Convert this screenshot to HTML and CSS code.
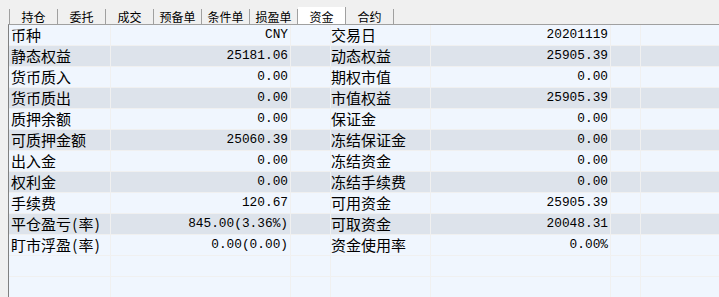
FILE: index.html
```html
<!DOCTYPE html>
<html lang="zh-CN">
<head>
<meta charset="utf-8">
<title>资金</title>
<link rel="stylesheet" href="styles.css">
</head>
<body>
<div class="tabs">
  <div class="tab first">持仓</div>
  <div class="tab">委托</div>
  <div class="tab">成交</div>
  <div class="tab">预备单</div>
  <div class="tab">条件单</div>
  <div class="tab">损盈单</div>
  <div class="tab active">资金</div>
  <div class="tab">合约</div>
</div>
<div class="grid">
  <div class="row light"><div class="c lbl">币种</div><div class="c val">CNY</div><div class="c"></div><div class="c lbl2">交易日</div><div class="c val">20201119</div><div class="c"></div><div class="c last"></div></div>
  <div class="row dark"><div class="c lbl">静态权益</div><div class="c val">25181.06</div><div class="c"></div><div class="c lbl2">动态权益</div><div class="c val">25905.39</div><div class="c"></div><div class="c last"></div></div>
  <div class="row light"><div class="c lbl">货币质入</div><div class="c val">0.00</div><div class="c"></div><div class="c lbl2">期权市值</div><div class="c val">0.00</div><div class="c"></div><div class="c last"></div></div>
  <div class="row dark"><div class="c lbl">货币质出</div><div class="c val">0.00</div><div class="c"></div><div class="c lbl2">市值权益</div><div class="c val">25905.39</div><div class="c"></div><div class="c last"></div></div>
  <div class="row light"><div class="c lbl">质押余额</div><div class="c val">0.00</div><div class="c"></div><div class="c lbl2">保证金</div><div class="c val">0.00</div><div class="c"></div><div class="c last"></div></div>
  <div class="row dark"><div class="c lbl">可质押金额</div><div class="c val">25060.39</div><div class="c"></div><div class="c lbl2">冻结保证金</div><div class="c val">0.00</div><div class="c"></div><div class="c last"></div></div>
  <div class="row light"><div class="c lbl">出入金</div><div class="c val">0.00</div><div class="c"></div><div class="c lbl2">冻结资金</div><div class="c val">0.00</div><div class="c"></div><div class="c last"></div></div>
  <div class="row dark"><div class="c lbl">权利金</div><div class="c val">0.00</div><div class="c"></div><div class="c lbl2">冻结手续费</div><div class="c val">0.00</div><div class="c"></div><div class="c last"></div></div>
  <div class="row light"><div class="c lbl">手续费</div><div class="c val">120.67</div><div class="c"></div><div class="c lbl2">可用资金</div><div class="c val">25905.39</div><div class="c"></div><div class="c last"></div></div>
  <div class="row dark"><div class="c lbl">平仓盈亏<span class="par">(</span>率<span class="par">)</span></div><div class="c val">845.00(3.36%)</div><div class="c"></div><div class="c lbl2">可取资金</div><div class="c val">20048.31</div><div class="c"></div><div class="c last"></div></div>
  <div class="row light"><div class="c lbl">盯市浮盈<span class="par">(</span>率<span class="par">)</span></div><div class="c val">0.00(0.00)</div><div class="c"></div><div class="c lbl2">资金使用率</div><div class="c val">0.00%</div><div class="c"></div><div class="c last"></div></div>
  <div class="row light"><div class="c lbl"></div><div class="c val"></div><div class="c"></div><div class="c lbl2"></div><div class="c val"></div><div class="c"></div><div class="c last"></div></div>
  <div class="row light"><div class="c lbl"></div><div class="c val"></div><div class="c"></div><div class="c lbl2"></div><div class="c val"></div><div class="c"></div><div class="c last"></div></div>
</div>
</body>
</html>
```

FILE: styles.css
```css
html, body {
  margin: 0;
  padding: 0;
  background: #f0f0f0;
  overflow: hidden;
}
body {
  width: 719px;
  height: 297px;
  font-family: "Noto Sans CJK SC", sans-serif;
  color: #000;
}
.tabs {
  display: flex;
  align-items: flex-end;
  height: 24px;
  padding-left: 9px;
  box-sizing: border-box;
}
.tab {
  width: 48px;
  height: 15px;
  line-height: 15px;
  font-size: 12px;
  text-align: center;
  border-right: 1px solid #a0a0a0;
  box-sizing: border-box;
}
.tab.first {
  width: 49px;
  border-left: 1px solid #a0a0a0;
}
.tab.active {
  background: #fff;
  height: 17px;
  padding-top: 2px;
}
.grid {
  margin-left: 8px;
  border-left: 1px solid #808080;
  border-top: 1px solid #a0a0a0;
}
.row {
  display: grid;
  grid-template-columns: 102px 180px 40px 100px 180px 30px 1fr;
  height: 21px;
  border-bottom: 1px solid #f0f0f0;
  box-sizing: border-box;
}
.row.light { background: #f0f6fe; }
.row.dark { background: #dde3eb; }
.c {
  border-right: 1px solid #f0f0f0;
  height: 20px;
  line-height: 20px;
  white-space: nowrap;
  overflow: hidden;
}
.c.last { border-right: none; }
.lbl {
  font-size: 15px;
  padding-left: 2px;
}
.lbl2 {
  font-size: 15px;
  padding-left: 0;
}
.par {
  display: inline-block;
  width: 7.5px;
  text-align: center;
}
.val {
  font-family: "Liberation Mono", monospace;
  font-size: 12.8px;
  text-align: right;
  padding-right: 2px;
}
```
